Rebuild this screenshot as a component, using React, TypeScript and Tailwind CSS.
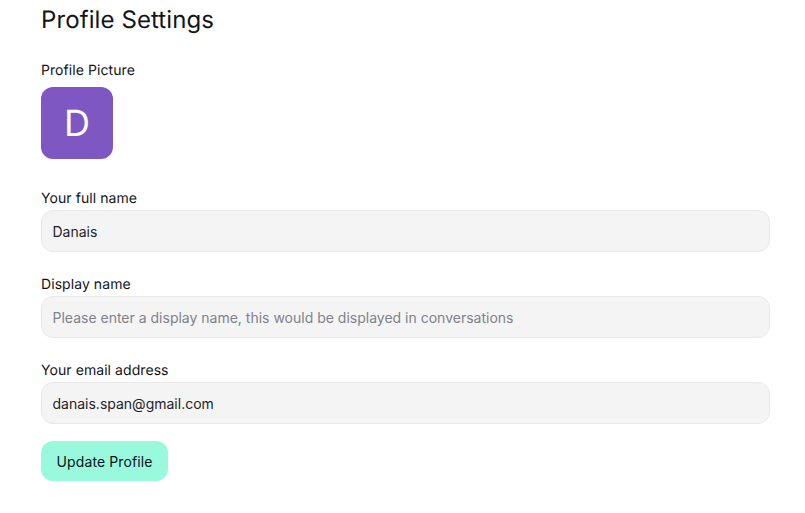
const inputClass =
  "h-[42px] w-full rounded-xl border border-[#e8e8e8] bg-[#f4f4f4] px-[10.5px] text-sm text-[#1f2328] outline-none placeholder:text-[#80828c]"

function Field({
  label,
  value,
  placeholder,
}: {
  label: string
  value?: string
  placeholder?: string
}) {
  return (
    <label className="block">
      <span className="block h-[23px] text-sm leading-[24px] tracking-[0.07px] text-[#121417]">{label}</span>
      <input className={inputClass} defaultValue={value} placeholder={placeholder} />
    </label>
  )
}

export default function App() {
  return (
    <div className="min-h-[513px] bg-white pl-[41px] pr-[35px] font-['Inter',sans-serif] [text-rendering:geometricPrecision]">
      <h1 className="pt-[5px] text-2xl leading-[30px] tracking-[0.1px] text-[#121417]">Profile Settings</h1>

      <div className="mt-[20px]">
        <p className="h-[22px] text-sm leading-[32px] tracking-[0.07px] text-[#121417]">Profile Picture</p>
        <div className="mt-[10px] flex h-[72px] w-[72px] items-center justify-center rounded-xl bg-[#7e57c2] text-4xl text-white">
          D
        </div>
      </div>

      <div className="mt-[28px] flex flex-col gap-[21px]">
        <Field label="Your full name" value="Danais" />
        <Field label="Display name" placeholder="Please enter a display name, this would be displayed in conversations" />
        <Field label="Your email address" value="danais.span@gmail.com" />
      </div>

      <button
        type="button"
        className="mt-[17px] h-10 w-[127px] rounded-xl bg-[#98f9dc] pt-px text-sm tracking-[0.1px] text-[#06131c]"
      >
        Update Profile
      </button>
    </div>
  )
}
